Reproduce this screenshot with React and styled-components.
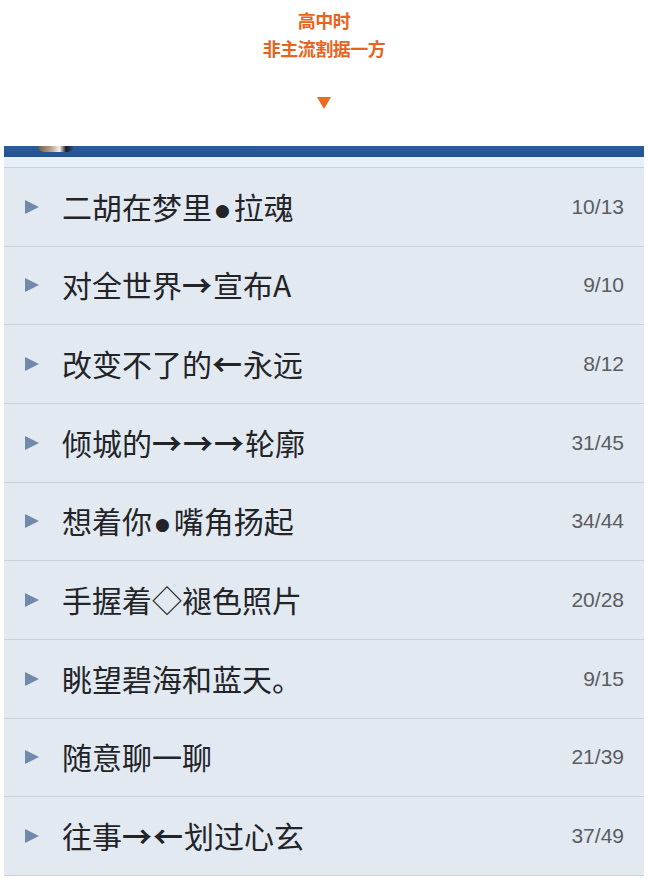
import React from 'react'
import styled, { createGlobalStyle } from 'styled-components'

const GlobalStyle = createGlobalStyle`
  body {
    margin: 0;
    background: #ffffff;
    font-family: "Noto Sans CJK SC", "Noto Sans", sans-serif;
  }
`

const rows = [
  { title: '二胡在梦里●拉魂', count: '10/13' },
  { title: '对全世界→宣布A', count: '9/10' },
  { title: '改变不了的←永远', count: '8/12' },
  { title: '倾城的→→→轮廓', count: '31/45' },
  { title: '想着你●嘴角扬起', count: '34/44' },
  { title: '手握着◇褪色照片', count: '20/28' },
  { title: '眺望碧海和蓝天。', count: '9/15' },
  { title: '随意聊一聊', count: '21/39' },
  { title: '往事→←划过心玄', count: '37/49' },
]

// split the title so arrows and dots can get their own glyph style
function renderTitle(text) {
  return text.split(/([●→←])/).filter(Boolean).map((part, i) => {
    if (part === '●') return <Dot key={i}>●</Dot>
    if (part === '→' || part === '←') return <Arr key={i}>{part}</Arr>
    return <span key={i}>{part}</span>
  })
}

function App() {
  return (
    <Page>
      <GlobalStyle />
      <Header>
        <Line>高中时</Line>
        <Line>非主流割据一方</Line>
        <Arrow />
      </Header>
      <Panel>
        <BlueBar>
          <Avatar />
        </BlueBar>
        <Strip />
        {rows.map((r) => (
          <Row key={r.title}>
            <Play />
            <Title>{renderTitle(r.title)}</Title>
            <Count>{r.count}</Count>
          </Row>
        ))}
      </Panel>
    </Page>
  )
}

export default App

const Page = styled.div`
  width: 648px;
  height: 882px;
  overflow: hidden;
`

const Header = styled.div`
  display: flex;
  flex-direction: column;
  align-items: center;
  padding-top: 6px;
  height: 140px;
  box-sizing: border-box;
`

const Line = styled.div`
  color: #e8641e;
  font-size: 18px;
  font-weight: 700;
  line-height: 28px;
  letter-spacing: -0.5px;
`

const Arrow = styled.div`
  margin-top: 35px;
  width: 0;
  height: 0;
  border-left: 7px solid transparent;
  border-right: 7px solid transparent;
  border-top: 12px solid #ee6a1c;
`

const Panel = styled.div`
  margin: 6px 4px 0;
  background: #e3e9f1;
`

const BlueBar = styled.div`
  position: relative;
  height: 11px;
  background: linear-gradient(#2c5b9b, #24528f);
`

const Avatar = styled.div`
  position: absolute;
  left: 34px;
  top: 0;
  width: 36px;
  height: 6px;
  border-radius: 0 0 18px 18px;
  background: linear-gradient(90deg, #6a5a4c 0%, #b9a08a 35%, #f2eee8 60%, #1a1a22 78%, rgba(0,0,0,0) 100%);
`

const Strip = styled.div`
  height: 10px;
  background: #e7f0f8;
  border-bottom: 1px solid #c8d0d9;
`

const Row = styled.div`
  display: flex;
  align-items: center;
  box-sizing: border-box;
  height: 78.67px;
  padding: 0 20px 0 21px;
  border-bottom: 1px solid #cad1da;
`

const Play = styled.div`
  width: 0;
  height: 0;
  border-top: 7px solid transparent;
  border-bottom: 7px solid transparent;
  border-left: 14px solid #7189ab;
`

const Title = styled.div`
  margin-left: 23px;
  flex: 1;
  color: #222428;
  font-size: 30px;
  line-height: 1;
  padding-bottom: 2px;
`

const Dot = styled.span`
  font-family: "DejaVu Sans", sans-serif;
  font-size: 17px;
  margin: 0 4px 0 3px;
  vertical-align: 3px;
`

const Arr = styled.span`
  font-weight: 700;
  display: inline-block;
  width: 31px;
`

const Count = styled.div`
  color: #5a5d62;
  font-family: "Liberation Sans", Arial, sans-serif;
  font-size: 21px;
`
